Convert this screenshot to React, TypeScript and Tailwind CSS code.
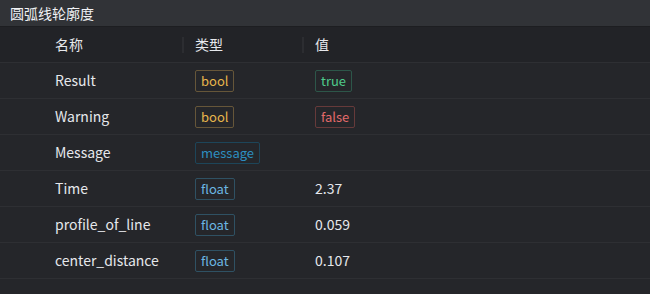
import React from "react";

type Tag = { label: string; cls: string };

const tags: Record<string, Tag> = {
  bool: { label: "bool", cls: "border-[#665639] text-[#e5b54c]" },
  message: { label: "message", cls: "border-[#1d4559] text-[#2d8fc0]" },
  float: { label: "float", cls: "border-[#2f5163] text-[#6cb6e2]" },
};

const rows: { name: string; type: string; value?: React.ReactNode }[] = [
  {
    name: "Result",
    type: "bool",
    value: (
      <span className="inline-flex h-[22px] items-center rounded-[2px] border border-[#2d5649] px-[5px] text-[13px] text-[#4fcb8c]">
        true
      </span>
    ),
  },
  {
    name: "Warning",
    type: "bool",
    value: (
      <span className="inline-flex h-[22px] items-center rounded-[2px] border border-[#663a3a] px-[5px] text-[13px] text-[#e36a6a]">
        false
      </span>
    ),
  },
  { name: "Message", type: "message" },
  { name: "Time", type: "float", value: "2.37" },
  { name: "profile_of_line", type: "float", value: "0.059" },
  { name: "center_distance", type: "float", value: "0.107" },
];

export default function App() {
  return (
    <div
      className="h-[294px] w-[650px] overflow-hidden bg-[#25262a] text-[#e6e8ec]"
      style={{ fontFamily: '"Noto Sans CJK SC", "Noto Sans", sans-serif' }}
    >
      <div className="flex h-[27px] items-center border-b border-[#1d1e21] bg-[#313337] pl-[10px] text-[14px] text-[#f0f2f5]">
        圆弧线轮廓度
      </div>
      <div className="grid h-[36px] grid-cols-[182px_120px_1fr] items-center border-b border-[#2e2f33] bg-[#222327] text-[14px]">
        <div className="pl-[55px]">名称</div>
        <div className="flex items-center">
          <div className="h-[16px] w-[2px] bg-[#2c2d31]" />
          <div className="pl-[11px]">类型</div>
        </div>
        <div className="flex items-center">
          <div className="h-[16px] w-[2px] bg-[#2c2d31]" />
          <div className="pl-[11px]">值</div>
        </div>
      </div>
      {rows.map((r) => {
        const t = tags[r.type];
        return (
          <div
            key={r.name}
            className="grid h-[36px] grid-cols-[182px_120px_1fr] items-center border-b border-[#2e2f33] text-[14px]"
          >
            <div className="pl-[55px]">{r.name}</div>
            <div className="pl-[13px]">
              <span
                className={`inline-flex h-[22px] items-center rounded-[2px] border px-[5px] text-[13px] ${t.cls}`}
              >
                {t.label}
              </span>
            </div>
            <div className="pl-[13px]">{r.value}</div>
          </div>
        );
      })}
    </div>
  );
}
